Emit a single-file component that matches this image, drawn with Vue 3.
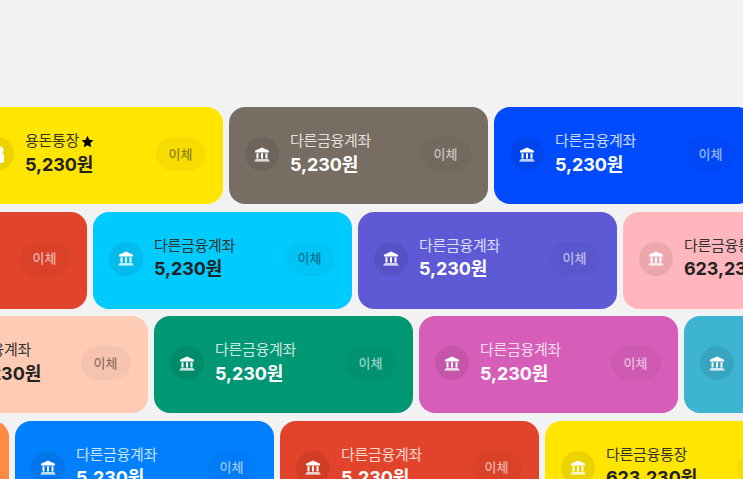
<script setup>
const textLight = 'light'
const textDark = 'dark'

const rows = [
  {
    offset: 'row-a',
    cards: [
      { color: '#ffe500', tone: textDark, icon: 'coin', name: '용돈통장', star: true, amount: '5,230원' },
      { color: '#786d63', tone: textLight, name: '다른금융계좌', amount: '5,230원' },
      { color: '#004bff', tone: textLight, name: '다른금융계좌', amount: '5,230원' }
    ]
  },
  {
    offset: 'row-b',
    cards: [
      { color: '#e2442b', tone: textLight, name: '다른금융계좌', amount: '5,230원' },
      { color: '#00cbff', tone: textDark, name: '다른금융계좌', amount: '5,230원' },
      { color: '#5e5ad6', tone: textLight, name: '다른금융계좌', amount: '5,230원' },
      { color: '#ffb6bd', tone: textDark, name: '다른금융통장', amount: '623,230원' }
    ]
  },
  {
    offset: 'row-c',
    cards: [
      { color: '#ffcbb5', tone: textDark, name: '다른금융계좌', amount: '623,230원' },
      { color: '#009775', tone: textLight, name: '다른금융계좌', amount: '5,230원' },
      { color: '#d65db8', tone: textLight, name: '다른금융계좌', amount: '5,230원' },
      { color: '#3db4d1', tone: textLight, name: '다른금융계좌', amount: '5,230원' }
    ]
  },
  {
    offset: 'row-d',
    cards: [
      { color: '#ff8a45', tone: textLight, name: '다른금융계좌', amount: '5,230원' },
      { color: '#0080ff', tone: textLight, name: '다른금융계좌', amount: '5,230원' },
      { color: '#e2442b', tone: textLight, name: '다른금융계좌', amount: '5,230원' },
      { color: '#ffe500', tone: textDark, name: '다른금융통장', amount: '623,230원' }
    ]
  }
]
</script>

<template>
  <div class="wall">
    <div v-for="row in rows" :key="row.offset" class="row" :class="row.offset">
      <div
        v-for="(card, i) in row.cards"
        :key="i"
        class="card"
        :class="card.tone"
        :style="{ backgroundColor: card.color }"
      >
        <span class="icon">
          <svg v-if="card.icon === 'coin'" width="13" height="17" viewBox="0 0 14 18" fill="#fff">
            <path d="M0 0h9a4.500 4.500 0 0 1 3 7.900 4.600 4.600 0 0 1-3 10.100H0z" />
          </svg>
          <svg v-else width="16" height="15" viewBox="0 0 16 15" fill="#fff">
            <path d="M8 .5 15 3.800V5.500H1V3.800z" />
            <path d="M2.500 6.300h2v5.200h-2zM7 6.300h2v5.200H7zM11.500 6.300h2v5.200h-2z" />
            <path d="M1.500 12.200h13v1H1.500zM.5 13.600h15v1H.5z" />
          </svg>
        </span>
        <div class="info">
          <div class="name">
            {{ card.name }}
            <svg v-if="card.star" class="star" width="13" height="13" viewBox="0 0 24 24">
              <path d="M12 1.500 15.300 8.600 23 9.500 17.300 14.800 18.800 22.500 12 18.700 5.200 22.500 6.700 14.800 1 9.500 8.700 8.600z" fill="#000" />
            </svg>
          </div>
          <div class="amount">{{ card.amount }}</div>
        </div>
        <button class="send">이체</button>
      </div>
    </div>
  </div>
</template>

<style>
html,
body {
  margin: 0;
  background: #f2f2f2;
}
</style>

<style scoped>
.wall {
  width: 743px;
  height: 479px;
  overflow: hidden;
  padding-top: 107px;
  box-sizing: border-box;
  display: flex;
  flex-direction: column;
  gap: 7.500px;
  background: #f2f2f2;
  font-family: Inter, "Noto Sans CJK KR", sans-serif;
}

.row {
  display: flex;
  gap: 6px;
  flex: none;
}

.row-a {
  margin-left: -36px;
}

.row-b {
  margin-left: -172px;
}

.row-c {
  margin-left: -111px;
}

.row-d {
  margin-left: -250px;
}

.card {
  flex: none;
  width: 259px;
  height: 97px;
  box-sizing: border-box;
  padding: 0 17px 3px 16px;
  border-radius: 16px;
  display: flex;
  align-items: center;
}

.icon {
  flex: none;
  width: 34px;
  height: 34px;
  border-radius: 50%;
  background: rgba(0, 0, 0, 0.08);
  display: flex;
  align-items: center;
  justify-content: center;
}

.info {
  flex: 1;
  margin-left: 11px;
  min-width: 0;
}

.name {
  font-size: 15px;
  line-height: 20px;
  letter-spacing: -0.3px;
  display: flex;
  align-items: center;
  gap: 2px;
}

.amount {
  margin-top: 1.500px;
  font-size: 18px;
  line-height: 24px;
  font-weight: 700;
  letter-spacing: -0.1px;
}

.send {
  flex: none;
  width: 50px;
  height: 34px;
  padding: 0 1px 2px 0;
  border: none;
  border-radius: 17px;
  background: rgba(0, 0, 0, 0.035);
  font-family: inherit;
  font-size: 13px;
  font-weight: 500;
}

.light .name {
  color: rgba(255, 255, 255, 0.8);
}

.light .amount {
  color: #fff;
}

.light .send {
  color: rgba(255, 255, 255, 0.6);
}

.dark .name {
  color: #333;
}

.dark .amount {
  color: #222;
}

.dark .send {
  color: rgba(0, 0, 0, 0.45);
}
</style>
